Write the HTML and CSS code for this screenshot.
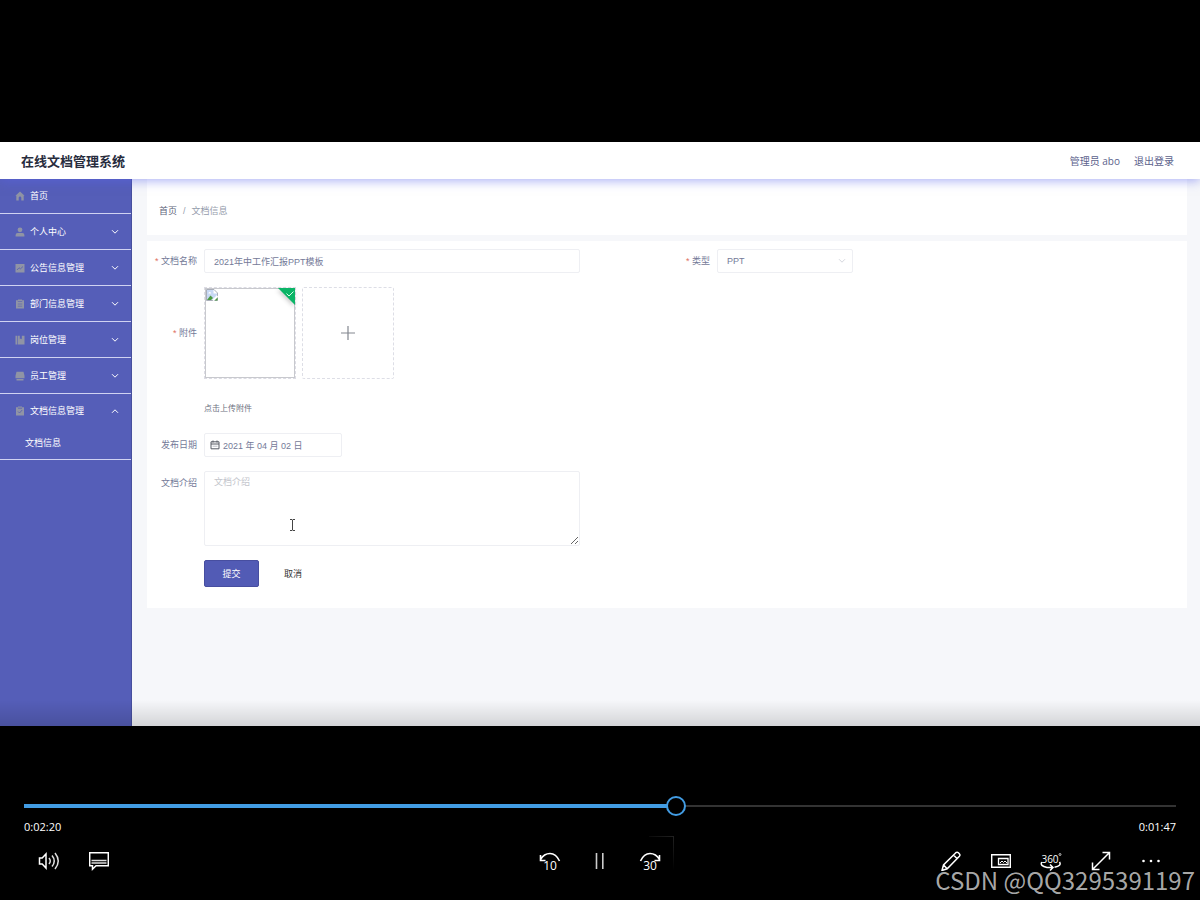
FILE: index.html
```html
<!DOCTYPE html>
<html lang="zh-CN">
<head>
<meta charset="utf-8">
<title>在线文档管理系统</title>
<link rel="stylesheet" href="styles.css">
</head>
<body>
<svg class="defs" aria-hidden="true">
  <symbol id="down" viewBox="0 0 8 6"><path d="M1 1.2 4 4.2 7 1.2" fill="none" stroke="currentColor"/></symbol>
</svg>

<div class="app">
  <header class="topbar">
    <h1 class="brand">在线文档管理系统</h1>
    <div class="account"><span>管理员 abo</span><a class="logout" href="#">退出登录</a></div>
  </header>

  <div class="body">
    <nav class="sidebar">
      <a class="item first" href="#"><svg class="ico" viewBox="0 0 10 10"><path d="M5 .5.4 4.7h.9V9.5h2.400V6.800a1.300 1.300 0 0 1 2.600 0v2.700h2.400V4.700h.9z"/></svg><span>首页</span></a>
      <button class="item"><svg class="ico" viewBox="0 0 10 10"><circle cx="5" cy="2.800" r="2.400"/><path d="M.6 9.500V8q0-2 2-2h4.800q2 0 2 2v1.500z"/></svg><span>个人中心</span><svg class="arrow"><use href="#down"/></svg></button>
      <button class="item"><svg class="ico" viewBox="0 0 10 10"><rect x=".5" y="1" width="9" height="8.500"/><path d="M2 7 4 4.800l1.500 1L8 3.500" fill="none" stroke="#555cb0" stroke-width=".8"/></svg><span>公告信息管理</span><svg class="arrow"><use href="#down"/></svg></button>
      <button class="item"><svg class="ico" viewBox="0 0 10 10"><path d="M1 1.300h2V.4h4v.9h2v8.300H1z"/><path d="M2.800 2.500h4.400M2.800 5h4.400M2.800 7.200h4.400" stroke="#555cb0" stroke-width=".6"/></svg><span>部门信息管理</span><svg class="arrow"><use href="#down"/></svg></button>
      <button class="item"><svg class="ico" viewBox="0 0 10 10"><path d="M.5.800h1.700v8.700H.5zM2.800.800h2v3.500l1-.8 1 .8V.800h2.700v8.700H2.800z"/></svg><span>岗位管理</span><svg class="arrow"><use href="#down"/></svg></button>
      <button class="item"><svg class="ico" viewBox="0 0 10 10"><path d="M1.500.8h7l1 4v2.400h-9V4.800zM1.500 8h7v1.500h-7z"/></svg><span>员工管理</span><svg class="arrow"><use href="#down"/></svg></button>
      <div class="group">
        <button class="item open"><svg class="ico" viewBox="0 0 10 10"><path d="M1 1.300h2V.4h4v.9h2v8.300H1z"/><path d="m3 5.500 1.500 1.500 2.700-3M3 2.200h4" fill="none" stroke="#555cb0" stroke-width=".8"/></svg><span>文档信息管理</span><svg class="arrow up"><use href="#down"/></svg></button>
        <a class="subitem" href="#">文档信息</a>
      </div>
    </nav>

    <main class="main">
      <div class="card crumbs"><a class="home" href="#">首页</a><span class="slash">/</span><span>文档信息</span></div>

      <form class="card form">
        <div class="row pair">
          <div class="field"><label class="label required" for="name">文档名称</label><input class="control wide" id="name" value="2021年中工作汇报PPT模板"></div>
          <div class="field"><label class="label required" for="kind">类型</label>
            <div class="selectbox"><select class="control" id="kind"><option>PPT</option></select><svg class="caret"><use href="#down"/></svg></div>
          </div>
        </div>

        <div class="row field">
          <span class="label required tall">附件</span>
          <div>
            <div class="uploads">
              <div class="thumb">
                <svg class="broken" viewBox="0 0 12 12"><path d="M.5.500h7.500l3.500 3.500v7.500H.5z" fill="#fff" stroke="#a9aeb9"/><path d="M1 1h6.500v3.500H11V6L6 11H1z" fill="#c7d8f4"/><path d="M1 11 4.500 6.500 7 9l-2 2z" fill="#4c9a43"/><path d="M12 6.500 6.500 12H8l4-4z" fill="#fff"/><path d="M8.500 11.500 11.500 8.500v3z" fill="#4c9a43"/><path d="M2.500 4q.5-1.500 1.500-.8 1.300 0 1 1.300H2.500z" fill="#fff"/></svg>
                <svg class="done" viewBox="0 0 17 17"><path d="M0 0h17v17z" fill="#0bb567"/><path d="m8.500 5.500 2.500 2.500 4.500-4.500" fill="none" stroke="#d8ffe9"/></svg>
              </div>
              <button type="button" class="add" aria-label="上传附件"><svg class="plus" viewBox="0 0 14 14"><path d="M7 0v14M0 7h14" stroke="#83878f" stroke-width="1.200"/></svg></button>
            </div>
            <p class="tip">点击上传附件</p>
          </div>
        </div>

        <div class="row field"><label class="label" for="date">发布日期</label>
          <div class="datebox"><svg class="cal" viewBox="0 0 10 10"><path d="M1 1.800h8v7H1zM1 4h8M3 .5v2M7 .5v2" fill="none" stroke="#555963"/><path d="M2.500 6.200h5" stroke="#b9bcc4"/></svg><input class="control" id="date" value="2021 年 04 月 02 日"></div>
        </div>

        <div class="row field"><label class="label" for="intro">文档介绍</label>
          <div class="introbox"><textarea class="control area" id="intro" placeholder="文档介绍"></textarea>
            <svg class="ibeam" viewBox="0 0 7 12"><path d="M1 .5h2l.5.500.5-.5h2M1 11.500h2l.5-.5.500.5h2M3.500 1v10" fill="none" stroke="#444"/></svg>
          </div>
        </div>

        <div class="actions"><button type="button" class="submit">提交</button><button type="button" class="cancel">取消</button></div>
      </form>
    </main>
  </div>
</div>

<section class="player">
  <input class="seek" type="range" min="0" max="247" value="140" aria-label="播放进度">
  <div class="times"><span>0:02:20</span><span>0:01:47</span></div>
  <div class="controls">
    <div class="set">
      <button class="ctl" aria-label="音量"><svg width="22" height="20" viewBox="0 0 22 20"><path d="M1.500 7h2.700L8 3v14l-3.800-4H1.500z" fill="none" stroke="#fff" stroke-width="1.500"/><path d="M11 7q2.500 3 0 6M14 4.500q4.500 5.500 0 11M17 2q6.500 8 0 16" fill="none" stroke="#ddd" stroke-width="1.500"/></svg></button>
      <button class="ctl" aria-label="字幕"><svg width="20" height="20" viewBox="0 0 20 20"><path d="M.7 1.700h18.600v13H7l-3.500 3.500v-3.500H.7z" fill="none" stroke="#fff" stroke-width="1.500"/><path d="M2.500 9.500h15M2.500 12h15" stroke="#ddd" stroke-width="1.500"/></svg></button>
    </div>
    <div class="set">
      <button class="ctl" aria-label="后退10秒"><svg width="24" height="32" viewBox="-1 -5 24 32"><path d="M1.500 9.500Q5 3.500 11 3.500T20.500 11M1.500 5v5.500H6.500" fill="none" stroke="#fff" stroke-width="1.600"/><text class="num" x="11" y="20">10</text></svg></button>
      <button class="ctl" aria-label="暂停"><svg width="10" height="16" viewBox="0 0 10 16"><path d="M1.500 0v16M7.800 0v16" stroke="#ccc" stroke-width="1.600"/></svg></button>
      <button class="ctl lit" aria-label="前进30秒"><svg width="24" height="32" viewBox="-1 -5 24 32"><path d="M20.500 9.500Q17 3.500 11 3.500T1.500 11M20.500 5v5.500H15.500" fill="none" stroke="#fff" stroke-width="1.600"/><text class="num" x="11" y="20">30</text></svg></button>
    </div>
    <div class="set end">
      <button class="ctl" aria-label="编辑"><svg width="20" height="20" viewBox="0 0 20 20"><path d="M1 19.500 2.500 14 14.800 1.700q1.300-1 2.600.1l.9.900q1.200 1.300.1 2.600L6.200 17.800zM12.500 4l3.700 3.700M2.500 14l3.700 3.800" fill="none" stroke="#fff" stroke-width="1.500"/></svg></button>
      <button class="ctl" aria-label="小窗播放"><svg width="20" height="14" viewBox="0 0 20 14"><path d="M.7.700h18.600v12.600H.7z" fill="none" stroke="#fff" stroke-width="1.400"/><path d="M7.500 4.500h9.500v6H7.500z" fill="none" stroke="#fff" stroke-width="1.300"/><path d="m9 9 2-2 1.500 1.500L14 7l2 2" fill="none" stroke="#fff"/></svg></button>
      <button class="ctl" aria-label="360度"><svg width="22" height="24" viewBox="0 -2 22 24"><text class="deg" x="10" y="12">360</text><circle cx="20" cy="3.500" r="1" fill="none" stroke="#fff" stroke-width=".7"/><path d="M1.800 11Q-.5 15 7 16.500H12M10 13.500l3 3-3 3M14.500 16.300Q22 15 19.500 11" fill="none" stroke="#fff" stroke-width="1.500"/></svg></button>
      <button class="ctl" aria-label="全屏"><svg width="20" height="20" viewBox="0 0 20 20"><path d="M1.500 18.500 18.500 1.500M11.500 1.500h7v7M1.500 11.500v7h7" fill="none" stroke="#fff" stroke-width="1.500"/></svg></button>
      <button class="ctl" aria-label="更多"><svg width="20" height="4" viewBox="0 0 20 4"><circle cx="2.500" cy="2" r="1.300" fill="#fff"/><circle cx="10" cy="2" r="1.300" fill="#fff"/><circle cx="17.500" cy="2" r="1.300" fill="#fff"/></svg></button>
    </div>
  </div>
  <span class="watermark">CSDN @QQ3295391197</span>
</section>
</body>
</html>
```
FILE: styles.css
```css
* { box-sizing: border-box; }

body {
  margin: 0;
  min-height: 100vh;
  padding-top: 142px;
  display: flex;
  flex-direction: column;
  background: #000;
  font: 9px/12px "Liberation Sans", "Noto Sans CJK SC", sans-serif;
  color: #747a98;
}

button, input, select, textarea { font: inherit; color: inherit; }
button { border: 0; padding: 0; background: none; }
a { color: inherit; text-decoration: none; }
.defs { display: none; }

/* application frame */
.app {
  position: relative;
  display: flex;
  flex-direction: column;
  min-height: 584px;
  overflow: hidden;
  background: #f6f7fa;
}
.app::after {
  content: "";
  position: absolute;
  inset: auto 0 0;
  height: 26px;
  background: linear-gradient(rgba(0, 0, 0, 0), rgba(0, 0, 0, .14));
  pointer-events: none;
}

.topbar {
  position: relative;
  z-index: 1;
  display: flex;
  align-items: center;
  justify-content: space-between;
  height: 37px;
  padding: 0 26px 0 21px;
  background: #fff;
  box-shadow: 0 2px 10px rgba(90, 100, 235, .5);
}
.brand { margin: 0; font: bold 13px/20px "Noto Sans CJK SC", sans-serif; color: #272c3d; }
.account {
  display: flex;
  gap: 14px;
  font: 10px/16px "Open Sans", "Noto Sans CJK SC", sans-serif;
  color: #5c628c;
}

.body { flex: 1; display: flex; }

/* side navigation */
.sidebar {
  flex: 0 0 132px;
  background: #555eb8;
  border-right: 1px solid #474f9e;
  color: #fff;
}
.item {
  display: flex;
  align-items: center;
  gap: 5px;
  width: 100%;
  height: 36px;
  padding: 0 12px 0 15px;
  border-bottom: 1px solid #d0d3f2;
  text-align: left;
}
.first { height: 35px; }
.open { height: 34px; border-bottom: 0; }
.group { border-bottom: 1px solid #d0d3f2; }
.subitem { display: block; padding: 0 25px; line-height: 31px; }
.ico { width: 10px; height: 10px; fill: #9094a5; }
.arrow { width: 8px; height: 6px; margin-left: auto; }
.up { transform: rotate(180deg); }

/* content */
.main {
  flex: 1;
  display: flex;
  flex-direction: column;
  gap: 6px;
  padding: 0 13px 0 15px;
}
.card { background: #fff; }
.crumbs {
  display: flex;
  align-items: center;
  gap: 6px;
  height: 56px;
  padding: 8px 12px 0;
  color: #959cac;
}
.home { color: #5d6379; }

.form {
  display: flex;
  flex-direction: column;
  gap: 14px;
  padding: 8px 7px 21px;
}
.pair { display: grid; grid-template-columns: 1fr 1fr; }
.field { display: flex; }
.label {
  flex: 0 0 50px;
  padding-right: 7px;
  text-align: right;
  line-height: 24px;
  white-space: nowrap;
}
.required::before { content: "* "; color: #e0705f; }
.tall { line-height: 92px; }

.control {
  width: 100%;
  height: 24px;
  padding: 0 9px;
  border: 1px solid #eeeff3;
  border-radius: 2px;
  background: #fff;
  outline: 0;
}
.wide, .introbox { width: 376px; }
.selectbox { position: relative; width: 136px; }
.selectbox .control { appearance: none; }
.caret {
  position: absolute;
  right: 7px;
  top: 9px;
  width: 8px;
  height: 6px;
  color: #d5d7de;
  pointer-events: none;
}

.uploads { display: flex; gap: 6px; }
.thumb {
  position: relative;
  width: 92px;
  height: 92px;
  border: 1px dashed #dcdce4;
  outline: 1px solid #c8c9ce;
  outline-offset: -2px;
  background: #fff;
}
.broken { position: absolute; left: 1px; top: 1px; width: 12px; height: 12px; }
.done {
  position: absolute;
  right: 0;
  top: 0;
  width: 17px;
  height: 17px;
  filter: drop-shadow(-1px 2px 2px rgba(0, 0, 0, .2));
}
.add {
  display: grid;
  place-items: center;
  width: 92px;
  height: 92px;
  border: 1px dashed #dddee6;
  border-radius: 2px;
}
.plus { width: 14px; height: 14px; }
.tip { margin: 20px 0 0; font-size: 8px; line-height: 20px; color: #6c7080; }

.datebox { position: relative; width: 138px; }
.datebox .control { padding-left: 18px; }
.cal { position: absolute; left: 6px; top: 7px; width: 10px; height: 10px; }

.introbox { position: relative; }
.area { display: block; height: 75px; padding: 4px 9px; resize: vertical; }
.area::placeholder { color: #c3c5cc; }
.ibeam { position: absolute; left: 85px; top: 48px; width: 7px; height: 12px; }

.actions { display: flex; gap: 25px; padding-left: 50px; }
.submit {
  width: 55px;
  height: 27px;
  border: 1px solid #474ea0;
  border-radius: 2px;
  background: #525bb5;
  color: #fff;
}
.cancel { color: #333; }

/* video controls */
.player {
  position: relative;
  flex: 1;
  padding: 70px 24px 0;
  color: #fff;
}
.seek {
  display: block;
  width: 100%;
  height: 20px;
  margin: 0;
  appearance: none;
  background:
    linear-gradient(#429ce3, #429ce3) 0 50% / 56% 4px no-repeat,
    linear-gradient(#333, #333) 0 50% / 100% 2px no-repeat;
}
.seek::-webkit-slider-thumb {
  appearance: none;
  width: 20px;
  height: 20px;
  border: 2px solid #429ce3;
  border-radius: 50%;
  background: #000;
}
.times {
  display: flex;
  justify-content: space-between;
  padding-top: 2px;
  font: 11px/18px "Open Sans", sans-serif;
}
.controls {
  display: grid;
  grid-template-columns: 1fr auto 1fr;
}
.set { display: flex; }
.end { justify-content: flex-end; }
.ctl { display: grid; place-items: center; width: 50px; height: 50px; }
.lit { position: relative; }
.lit::after {
  content: "";
  position: absolute;
  inset: 0 1px 16px 24px;
  border: 1px solid #222;
  border-width: 1px 1px 0 0;
  mask: linear-gradient(45deg, transparent 40%, #000);
}
.num, .deg { fill: #fff; text-anchor: middle; font: 12px "Open Sans", sans-serif; }
.deg { font-size: 10px; }
.watermark {
  position: absolute;
  right: 5px;
  bottom: 4px;
  font: 24px/32px "Noto Sans CJK SC", sans-serif;
  color: rgba(190, 190, 190, .9);
}
```
